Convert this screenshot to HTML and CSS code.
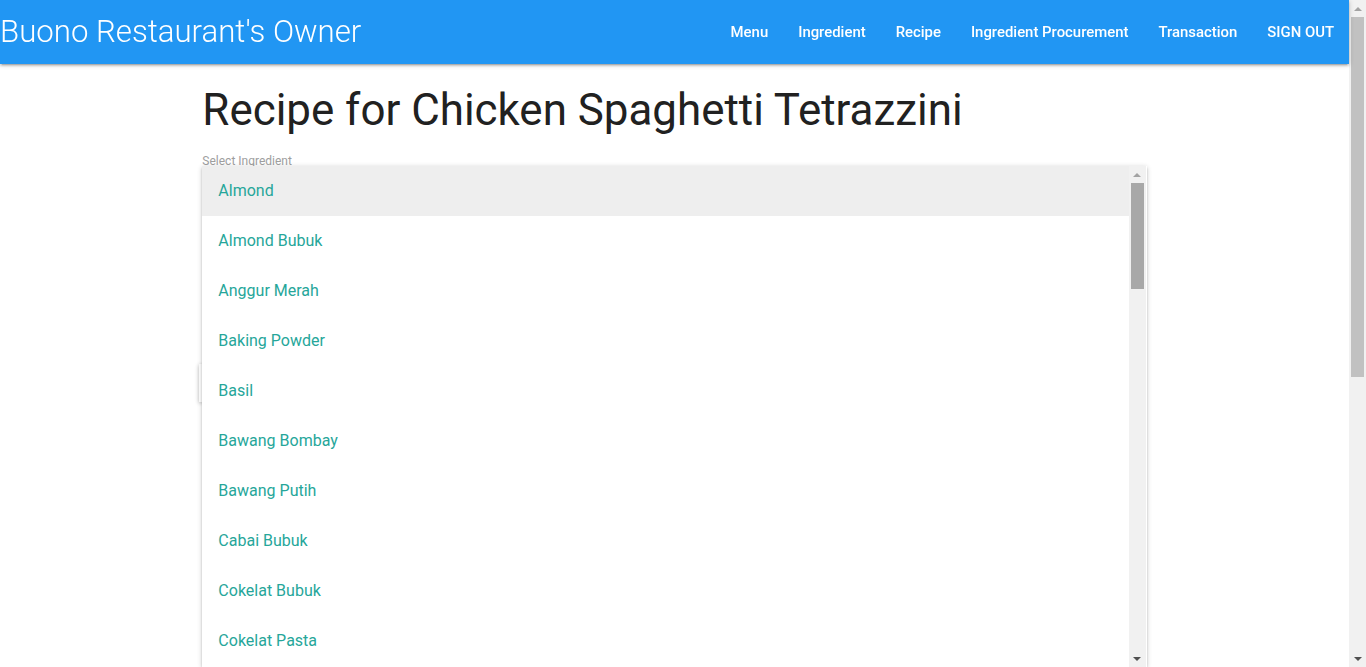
FILE: index.html
```html
<!DOCTYPE html>
<html>
<head>
<meta charset="utf-8">
<title>Recipe</title>
<link rel="stylesheet" href="styles.css">
</head>
<body>
<div class="page">
  <nav class="navbar">
    <a class="brand" href="#">Buono Restaurant's Owner</a>
    <ul class="nav-links">
      <li><a href="#">Menu</a></li>
      <li><a href="#">Ingredient</a></li>
      <li><a href="#">Recipe</a></li>
      <li><a href="#">Ingredient Procurement</a></li>
      <li><a href="#">Transaction</a></li>
      <li><a href="#">SIGN OUT</a></li>
    </ul>
  </nav>
  <main class="container">
    <h3 class="title">Recipe for Chicken Spaghetti Tetrazzini</h3>
    <label class="field-label">Select Ingredient</label>
    <div class="select-wrapper">
      <input class="select-input" type="text" value="Almond" readonly>
      <div class="below-card"></div>
      <div class="dropdown">
        <ul class="dropdown-list">
          <li class="active"><span>Almond</span></li>
          <li><span>Almond Bubuk</span></li>
          <li><span>Anggur Merah</span></li>
          <li><span>Baking Powder</span></li>
          <li><span>Basil</span></li>
          <li><span>Bawang Bombay</span></li>
          <li><span>Bawang Putih</span></li>
          <li><span>Cabai Bubuk</span></li>
          <li><span>Cokelat Bubuk</span></li>
          <li><span>Cokelat Pasta</span></li>
        </ul>
        <div class="scrollbar inner">
          <div class="arrow up light"></div>
          <div class="track"><div class="thumb dark"></div></div>
          <div class="arrow down"></div>
        </div>
      </div>
    </div>
  </main>
</div>
<div class="scrollbar page-scroll">
  <div class="arrow up light"></div>
  <div class="track"><div class="thumb"></div></div>
  <div class="arrow down"></div>
</div>
</body>
</html>
```
FILE: styles.css
```css
html, body {
  margin: 0;
  padding: 0;
  overflow: hidden;
  height: 100%;
}
body {
  font-family: Roboto, "Liberation Sans", sans-serif;
  color: rgba(0,0,0,0.87);
  background: #fff;
}
.page {
  margin-right: 17px;
  height: 100%;
}
.navbar {
  height: 64px;
  background: #2196f3;
  display: flex;
  align-items: center;
  justify-content: space-between;
  box-shadow: 0 2px 2px 0 rgba(0,0,0,0.14), 0 3px 1px -2px rgba(0,0,0,0.12), 0 1px 5px 0 rgba(0,0,0,0.2);
  position: relative;
  z-index: 2;
}
.brand {
  color: #fff;
  text-decoration: none;
  font-size: 31.2px;
  font-weight: 300;
  line-height: 64px;
  white-space: nowrap;
}
.nav-links {
  list-style: none;
  margin: 0;
  padding: 0;
  display: flex;
  height: 64px;
}
.nav-links a {
  display: block;
  color: #fff;
  text-decoration: none;
  font-size: 14.9px;
  font-weight: 500;
  line-height: 64px;
  padding: 0 15px;
}
.container {
  width: 70%;
  margin: 0 auto;
}
.title {
  font-size: 43.9px;
  font-weight: 400;
  line-height: 51px;
  margin: 21px 0 0;
  color: #212121;
}
.field-label {
  display: block;
  font-size: 12px;
  color: #9e9e9e;
  line-height: 14px;
  margin-top: 18px;
  height: 12px;
}
.select-wrapper {
  position: relative;
}
.select-input {
  display: block;
  width: 100%;
  box-sizing: border-box;
  border: none;
  border-bottom: 1px solid #9e9e9e;
  height: 48px;
  font-family: inherit;
  font-size: 16px;
  outline: none;
  background: transparent;
}
.below-card {
  height: 38px;
  margin-top: 150px;
  margin-left: -3px;
  width: 4px;
  box-shadow: 0 1px 4px rgba(0,0,0,0.3);
}
.dropdown {
  position: absolute;
  top: 0;
  left: 0;
  right: 0;
  height: 501px;
  background: #fff;
  display: flex;
  overflow: hidden;
  box-shadow: 0 2px 2px 0 rgba(0,0,0,0.14), 0 3px 1px -2px rgba(0,0,0,0.12), 0 1px 5px 0 rgba(0,0,0,0.2);
  z-index: 5;
}
.dropdown-list {
  flex: 1;
  margin: 0;
  padding: 0;
  list-style: none;
  overflow: hidden;
}
.dropdown-list li {
  height: 50px;
  box-sizing: border-box;
  padding: 14px 16px;
  line-height: 22px;
}
.dropdown-list li.active {
  background: #eeeeee;
}
.dropdown-list li span {
  font-size: 16px;
  color: #26a69a;
}
.scrollbar {
  width: 17px;
  background: #f1f1f1;
  display: flex;
  flex-direction: column;
}
.scrollbar.inner {
  margin-right: 1px;
}
.page-scroll {
  position: fixed;
  top: 0;
  right: 0;
  bottom: 0;
}
.arrow {
  height: 17px;
  display: flex;
  align-items: center;
  justify-content: center;
}
.arrow::before {
  content: "";
  width: 0;
  height: 0;
  border-left: 4px solid transparent;
  border-right: 4px solid transparent;
}
.arrow.up::before {
  border-bottom: 4px solid #a3a3a3;
}
.arrow.down::before {
  border-top: 4px solid #505050;
}
.track {
  flex: 1;
  padding: 0 2px;
}
.thumb {
  height: 360px;
  background: #c1c1c1;
}
.thumb.dark {
  height: 106px;
  background: #a8a8a8;
}
```
